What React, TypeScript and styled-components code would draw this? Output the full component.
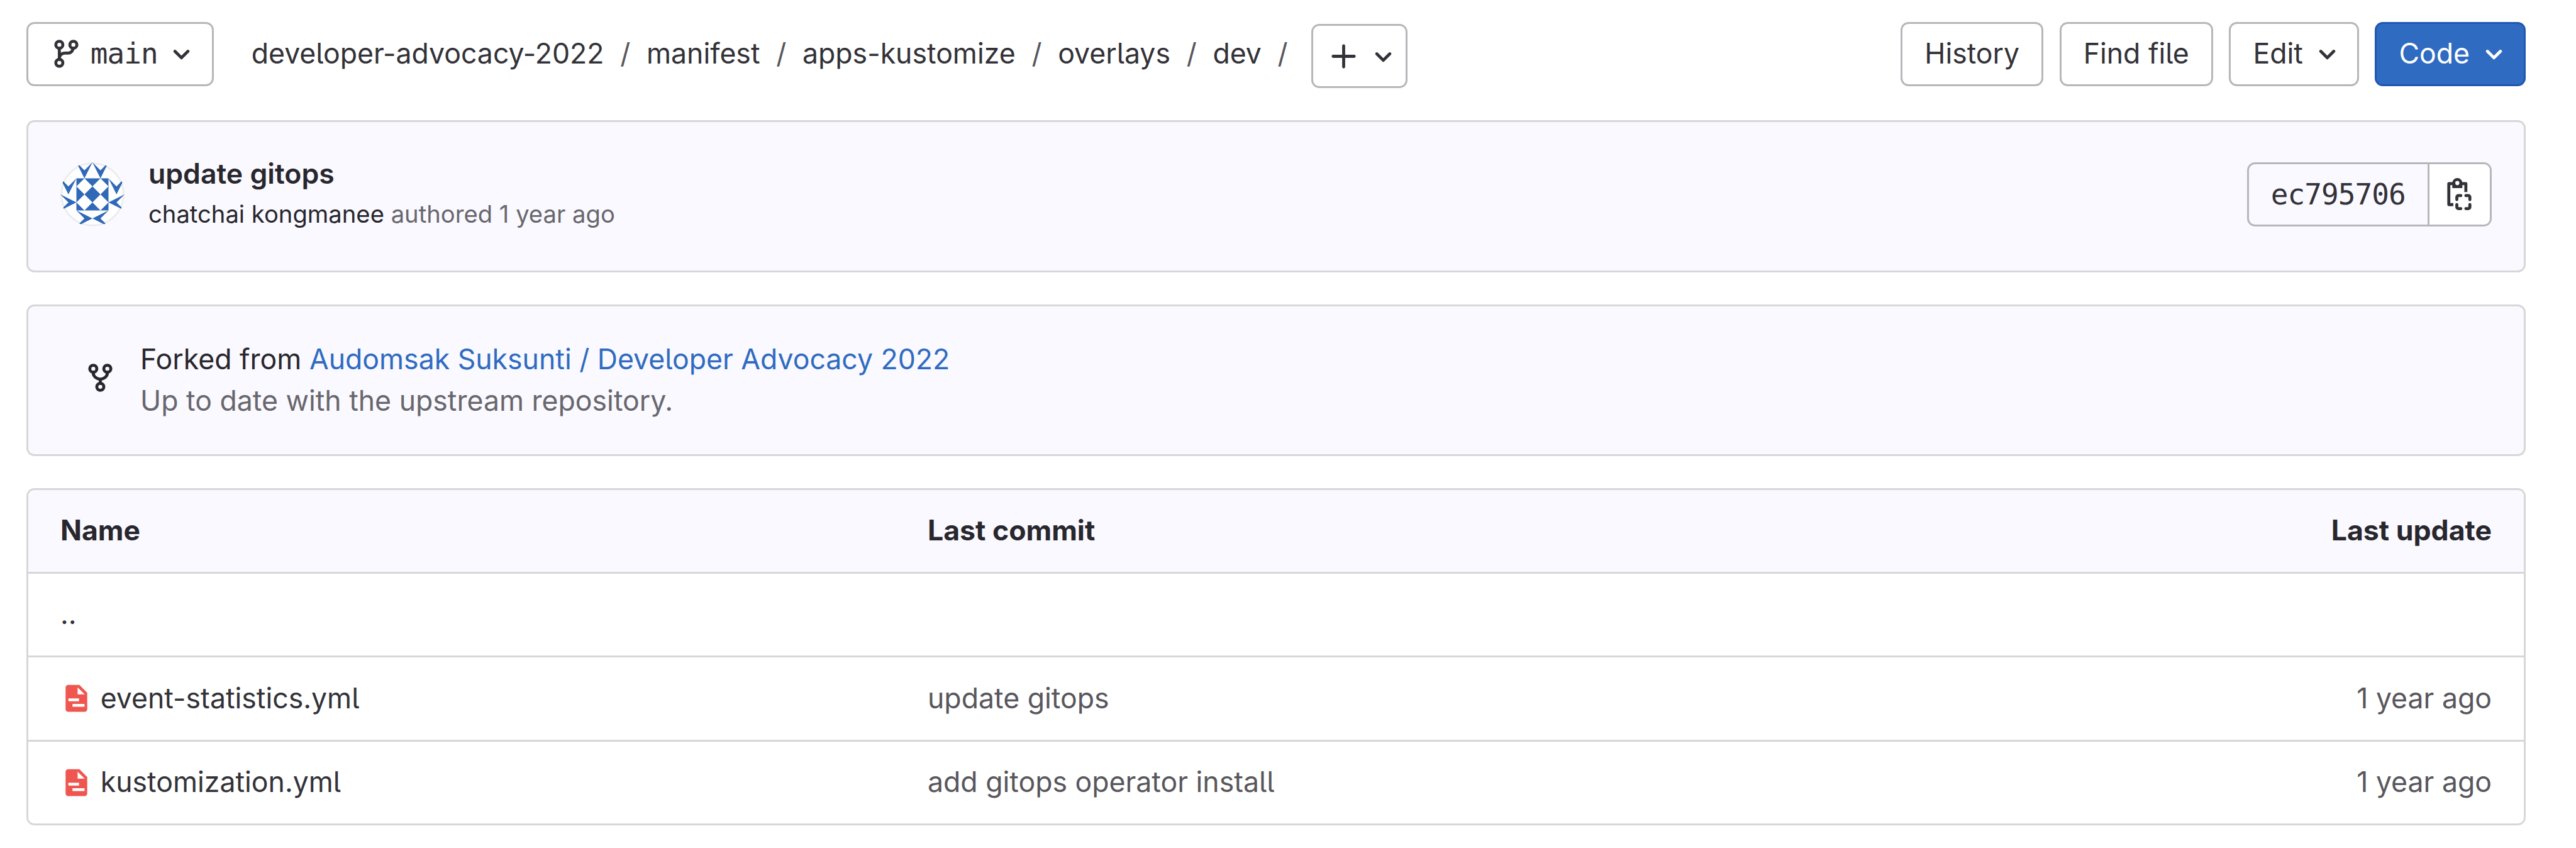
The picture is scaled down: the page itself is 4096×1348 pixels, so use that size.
import React from 'react';
import styled, { createGlobalStyle } from 'styled-components';

/* One design pixel on this high-density canvas. */
const u = (n: number) => `${(n * 3.1842).toFixed(2)}px`;

const Global = createGlobalStyle`
  * { box-sizing: border-box; }
  body {
    margin: 0;
    background: #fff;
    color: #28272d;
    font-family: Inter, 'Noto Sans', sans-serif;
    font-size: ${u(14)};
    line-height: ${u(20)};
    font-feature-settings: 'cv05';
  }
`;

const Page = styled.main`
  display: flex;
  flex-direction: column;
  height: 1348px;
  padding: 34.5px 80px 0 42px;
  background: #fff;
`;

const Toolbar = styled.header`
  display: flex;
  flex: none;
  align-items: flex-start;
  height: 156.5px;
`;

const Button = styled.button<{ $primary?: boolean; $dropdown?: boolean }>`
  display: inline-flex;
  align-items: center;
  gap: ${u(4)};
  height: 102px;
  padding: 0 ${p => u(p.$dropdown ? 7 : 11)} 0 ${u(11)};
  border: 3px solid ${p => (p.$primary ? '#2057b0' : '#b7b6bb')};
  border-radius: ${u(4)};
  background: ${p => (p.$primary ? '#2f6bc1' : '#fff')};
  color: ${p => (p.$primary ? '#fff' : '#333238')};
  font: inherit;
  white-space: nowrap;
`;

const Mono = styled.span`
  font-family: 'DejaVu Sans Mono', monospace;
  font-size: 46px;
  letter-spacing: -0.95px;
`;

const Crumbs = styled.nav`
  display: flex;
  flex: 1;
  align-items: flex-start;
  margin-left: 60px;
  color: #333238;
`;

const Crumb = styled.span`
  padding-top: 19px;
`;

const Slash = styled.span`
  width: 67.5px;
  padding-top: 19px;
  text-align: center;
  color: #58575d;
`;

const AddButton = styled(Button)`
  margin: 3.5px 0 0 12px;
  padding: 0 ${u(3)} 0 ${u(7)};
`;

const Actions = styled.div`
  display: flex;
  gap: 25.5px;
`;

const Panel = styled.section`
  display: flex;
  flex: none;
  align-items: center;
  height: 241.5px;
  margin-bottom: 51.2px;
  padding: 0 51px;
  border: 3px solid #d7d7d9;
  border-radius: ${u(4)};
  background: #faf9ff;
`;

const CommitPanel = styled(Panel)`
  padding-bottom: 6.5px;
`;

const Avatar = styled.svg`
  flex: none;
  width: 102px;
  height: 102px;
  margin-right: 38px;
  border-radius: 50%;
  background: #fff;
`;

const Texts = styled.div<{ $line?: number }>`
  display: flex;
  flex: 1;
  flex-direction: column;
  line-height: ${p => u(p.$line ?? 20)};
`;

const Small = styled.div`
  font-size: ${u(12)};
`;

const Strong = styled.strong`
  font-weight: 600;
`;

const Muted = styled.span`
  color: #68676d;
`;

const Link = styled.a`
  color: #2f6bc1;
`;

const Sha = styled.div`
  display: flex;
  height: 102px;
  border: 3px solid #b7b6bb;
  border-radius: ${u(4)};
  overflow: hidden;
`;

const ShaCode = styled(Mono)`
  padding: 0 ${u(11)};
  line-height: 96px;
  color: #333238;
`;

const Copy = styled.button`
  display: flex;
  align-items: center;
  padding: 0 ${u(7.2)} 0 ${u(7)};
  border: 0;
  border-left: 3px solid #b7b6bb;
  background: #fff;
  color: #333238;
`;

const Table = styled.section`
  flex: none;
  border: 3px solid #d7d7d9;
  border-radius: ${u(4)};
  overflow: hidden;
`;

const Row = styled.div<{ $head?: boolean }>`
  display: grid;
  grid-template-columns: 1379px 1fr auto;
  align-items: center;
  height: ${p => (p.$head ? 129.5 : 133.5)}px;
  padding: 0 51px;
  background: ${p => (p.$head ? '#faf9ff' : '#fff')};
  color: ${p => (p.$head ? '#28272d' : '#58575d')};
  font-weight: ${p => (p.$head ? 700 : 400)};
  & + & { border-top: 3px solid #d7d7d9; }
`;

const FileName = styled.span`
  display: flex;
  align-items: center;
  gap: ${u(4)};
  color: #333238;
`;

const Icon = styled.svg`
  flex: none;
  width: 51px;
  height: 51px;
  fill: currentColor;
`;

const LineIcon = styled(Icon)`
  fill: none;
  stroke: currentColor;
  stroke-width: 1.5;
  stroke-linecap: round;
  stroke-linejoin: round;
`;

const ForkMark = styled(LineIcon)`
  margin: 0 38px 7px;
`;

const Chevron = () => (
  <Icon viewBox="0 0 16 16">
    <path d="M4.22 6.22a.75.75 0 0 1 1.06 0L8 8.94l2.72-2.72a.75.75 0 1 1 1.06 1.06l-3.25 3.25a.75.75 0 0 1-1.06 0L4.22 7.28a.75.75 0 0 1 0-1.06z" />
  </Icon>
);

const BranchIcon = () => (
  <LineIcon viewBox="0 0 16 16">
    <circle cx="4.5" cy="3.5" r="1.75" />
    <circle cx="11.5" cy="3.5" r="1.75" />
    <circle cx="4.5" cy="12.5" r="1.75" />
    <path d="M4.5 5.25v5.5M11.4 5.25C11.1 6.75 10.3 7.65 8.9 7.65H7.3C5.7 7.65 4.5 8.8 4.5 10.3" />
  </LineIcon>
);

const ForkIcon = () => (
  <ForkMark viewBox="0 0 16 16">
    <circle cx="4.5" cy="3.5" r="1.75" />
    <circle cx="11.5" cy="3.5" r="1.75" />
    <circle cx="8" cy="12.5" r="1.75" />
    <path d="M4.5 5.25v.5C4.5 7.4 6.2 8.5 8 8.75 9.8 8.5 11.5 7.4 11.5 5.75v-.5M8 8.75v2" />
  </ForkMark>
);

const PlusIcon = () => (
  <LineIcon viewBox="0 0 16 16">
    <path d="M8 2.75v10.5M2.75 8h10.5" />
  </LineIcon>
);

const CopyIcon = () => (
  <LineIcon viewBox="0 0 16 16">
    <path d="M11.25 7V2.75H2.75v10.5H5" strokeLinecap="butt" />
    <path
      d="M4.5 5V2.5a2.5 2.5 0 0 1 5 0V5zM7 1.5a1 1 0 1 0 0 2 1 1 0 0 0 0-2z"
      fill="currentColor"
      stroke="none"
      fillRule="evenodd"
    />
    <circle cx="7" cy="2.5" r="1" fill="#fff" stroke="none" />
    <path d="M6.75 10.75V9.5a.75.75 0 0 1 .75-.75h1.25M11.25 8.75h1.25a.75.75 0 0 1 .75.75v1.25M13.25 13.25v1.25a.75.75 0 0 1-.75.75h-1.25M8.75 15.25H7.5a.75.75 0 0 1-.75-.75v-1.25" />
  </LineIcon>
);

const YamlIcon = () => (
  <Icon viewBox="0 0 16 16">
    <path
      fill="#ef5650"
      fillRule="evenodd"
      d="M3.9 1.2h5.6l3.9 3.9v8.2a1.3 1.3 0 0 1-1.3 1.3H3.9a1.3 1.3 0 0 1-1.3-1.3V2.5a1.3 1.3 0 0 1 1.3-1.3zM8.6 2.4v3.5h3.55zM4 7.95v1.4h5.3v-1.4zM6.05 10.65v1.4h6v-1.4z"
    />
  </Icon>
);

const Identicon = () => (
  <Avatar viewBox="0 0 8 8">
    <g fill="#3069b8">
      <path d="M2 0 3 1 4 0 3 2zM4 0 5 1 6 0 5 2zM0 2 1 3 2 2 1 4zM6 2 7 3 8 2 7 4z" />
      <path d="M0 4 2 5 0 6 1 5zM8 4 6 5 8 6 7 5zM2 6 4 7 2 8 3 7zM6 6 4 7 6 8 5 7z" />
      <path d="M2 2h4v4H2z" />
    </g>
    <path fill="#fff" d="M3 2 4 3 3 4 2 3zM5 2 6 3 5 4 4 3zM3 4 4 5 3 6 2 5zM5 4 6 5 5 6 4 5z" />
    <circle cx="4" cy="4" r="3.875" fill="none" stroke="#1f1e24" strokeOpacity=".08" strokeWidth=".25" />
  </Avatar>
);

const crumbs = ['developer-advocacy-2022', 'manifest', 'apps-kustomize', 'overlays', 'dev'];

const files = [
  { name: 'event-statistics.yml', commit: 'update gitops', updated: '1 year ago' },
  { name: 'kustomization.yml', commit: 'add gitops operator install', updated: '1 year ago' },
];

export default function App() {
  return (
    <>
      <Global />
      <Page>
        <Toolbar>
          <Button $dropdown>
            <BranchIcon />
            <Mono>main</Mono>
            <Chevron />
          </Button>
          <Crumbs>
            {crumbs.map(crumb => (
              <React.Fragment key={crumb}>
                <Crumb>{crumb}</Crumb>
                <Slash>/</Slash>
              </React.Fragment>
            ))}
            <AddButton>
              <PlusIcon />
              <Chevron />
            </AddButton>
          </Crumbs>
          <Actions>
            <Button>History</Button>
            <Button>Find file</Button>
            <Button $dropdown>Edit <Chevron /></Button>
            <Button $dropdown $primary>Code <Chevron /></Button>
          </Actions>
        </Toolbar>
        <CommitPanel>
          <Identicon />
          <Texts>
            <Strong>update gitops</Strong>
            <Small>chatchai kongmanee <Muted>authored 1 year ago</Muted></Small>
          </Texts>
          <Sha>
            <ShaCode>ec795706</ShaCode>
            <Copy><CopyIcon /></Copy>
          </Sha>
        </CommitPanel>
        <Panel>
          <ForkIcon />
          <Texts $line={20.9}>
            <span>Forked from <Link>Audomsak Suksunti / Developer Advocacy 2022</Link></span>
            <Muted>Up to date with the upstream repository.</Muted>
          </Texts>
        </Panel>
        <Table>
          <Row $head>
            <span>Name</span>
            <span>Last commit</span>
            <span>Last update</span>
          </Row>
          <Row><FileName>..</FileName></Row>
          {files.map(file => (
            <Row key={file.name}>
              <FileName><YamlIcon />{file.name}</FileName>
              <span>{file.commit}</span>
              <span>{file.updated}</span>
            </Row>
          ))}
        </Table>
      </Page>
    </>
  );
}
